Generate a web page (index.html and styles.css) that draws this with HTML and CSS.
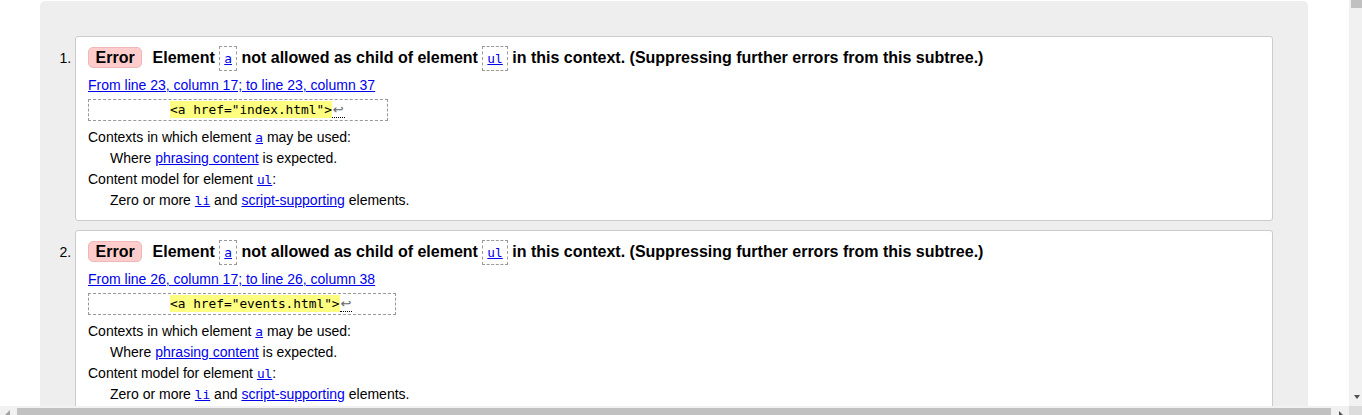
FILE: index.html
```html
<!DOCTYPE html>
<html lang="en">
<head>
<meta charset="utf-8">
<title>Validation results</title>
<link rel="stylesheet" href="styles.css">
</head>
<body>
<div class="results">
  <ol class="messages">
    <li class="msg">
      <p class="heading"><span class="badge">Error</span> Element <code class="box"><a href="#">a</a></code> not allowed as child of element <code class="box"><a href="#">ul</a></code> in this context. (Suppressing further errors from this subtree.)</p>
      <p class="location"><a href="#">From line 23, column 17; to line 23, column 37</a></p>
      <p class="extract"><code>          <b>&lt;a href="index.html"&gt;</b><span class="lf">↩</span>     </code></p>
      <p class="line">Contexts in which element <a href="#"><code>a</code></a> may be used:</p>
      <p class="line indent">Where <a href="#">phrasing content</a> is expected.</p>
      <p class="line">Content model for element <a href="#"><code>ul</code></a>:</p>
      <p class="line indent">Zero or more <a href="#"><code>li</code></a> and <a href="#">script-supporting</a> elements.</p>
    </li>
    <li class="msg">
      <p class="heading"><span class="badge">Error</span> Element <code class="box"><a href="#">a</a></code> not allowed as child of element <code class="box"><a href="#">ul</a></code> in this context. (Suppressing further errors from this subtree.)</p>
      <p class="location"><a href="#">From line 26, column 17; to line 26, column 38</a></p>
      <p class="extract"><code>          <b>&lt;a href="events.html"&gt;</b><span class="lf">↩</span>     </code></p>
      <p class="line">Contexts in which element <a href="#"><code>a</code></a> may be used:</p>
      <p class="line indent">Where <a href="#">phrasing content</a> is expected.</p>
      <p class="line">Content model for element <a href="#"><code>ul</code></a>:</p>
      <p class="line indent">Zero or more <a href="#"><code>li</code></a> and <a href="#">script-supporting</a> elements.</p>
    </li>
  </ol>
</div>
<div class="vscroll"><div class="vthumb"></div><div class="vdown"></div></div>
<div class="hscroll"><div class="hleft"></div><div class="hthumb"></div><div class="hright"></div></div>
<div class="corner"></div>
</body>
</html>
```
FILE: styles.css
```css
html, body {
  margin: 0;
  background: #fff;
}
body {
  font-family: "Liberation Sans", Arial, sans-serif;
  font-size: 14px;
  color: #000;
  overflow: hidden;
}
a {
  color: #0000ee;
}
code {
  font-family: "DejaVu Sans Mono", "Liberation Mono", monospace;
  font-size: 12.8px;
}
.results {
  margin: 1px 0 0 40px;
  width: 1268px;
  box-sizing: border-box;
  padding: 35px 35px 0;
  background: #eeeeee;
  border-radius: 5px 5px 0 0;
}
.messages {
  margin: 0;
  padding: 0;
  list-style: decimal outside;
}
.msg {
  background: #fff;
  border: 1px solid #ccc;
  border-radius: 3px;
  padding: 9px 12px 9px;
  margin-bottom: 9px;
}
.msg p {
  margin: 0;
}
.heading {
  font-size: 16px;
  font-weight: bold;
  line-height: 24px;
}
.badge {
  display: inline-block;
  background: #ffcccc;
  border: 1px solid #eeb8b8;
  border-radius: 5px;
  padding: 0 6.5px;
  line-height: 19px;
  margin-right: 6px;
}
.box {
  display: inline-block;
  border: 1px dashed #999;
  padding: 0 4px;
  line-height: 23px;
  font-weight: normal;
}
.msg .location {
  margin-top: 4px;
  line-height: 21px;
}
.msg .extract {
  width: fit-content;
  margin-top: 3px;
  border: 1px dashed #999;
  padding: 0 4px;
  font-family: "DejaVu Sans Mono", "Liberation Mono", monospace;
  font-size: 12.8px;
  line-height: 20px;
}
.extract code {
  white-space: pre;
}
.extract b {
  font-weight: normal;
  background: #ffff80;
  padding: 1px 0;
}
.lf {
  font-family: "DejaVu Sans", sans-serif;
  font-size: 13px;
  color: #666;
  border-bottom: 1px dotted #000;
  padding: 0 1px;
}
.line {
  line-height: 21px;
}
.msg .extract + .line {
  margin-top: 6px;
}
.indent {
  padding-left: 22px;
}

.vscroll {
  position: fixed;
  left: 1349px;
  top: 0;
  width: 13px;
  height: 406px;
  background: #f1f1f1;
}
.vthumb {
  position: absolute;
  left: 2px;
  top: 0;
  width: 11px;
  height: 8px;
  background: #c1c1c1;
}
.vdown {
  position: absolute;
  left: 5px;
  top: 395px;
  width: 0;
  height: 0;
  border-left: 3.5px solid transparent;
  border-right: 3.5px solid transparent;
  border-top: 4px solid #505050;
}
.hscroll {
  position: fixed;
  left: 0;
  top: 406px;
  width: 1349px;
  height: 9px;
  background: #f1f1f1;
}
.hthumb {
  position: absolute;
  left: 17px;
  top: 2px;
  width: 1314px;
  height: 7px;
  background: #c1c1c1;
}
.hleft {
  position: absolute;
  left: 5px;
  top: 4px;
  width: 0;
  height: 0;
  border-left: 5px solid transparent;
  border-bottom: 5px solid #a3a3a3;
}
.hright {
  position: absolute;
  left: 1339px;
  top: 5px;
  width: 0;
  height: 0;
  border-right: 4px solid transparent;
  border-bottom: 4px solid #505050;
}
.corner {
  position: fixed;
  left: 1349px;
  top: 406px;
  width: 13px;
  height: 9px;
  background: #dcdcdc;
}
```
